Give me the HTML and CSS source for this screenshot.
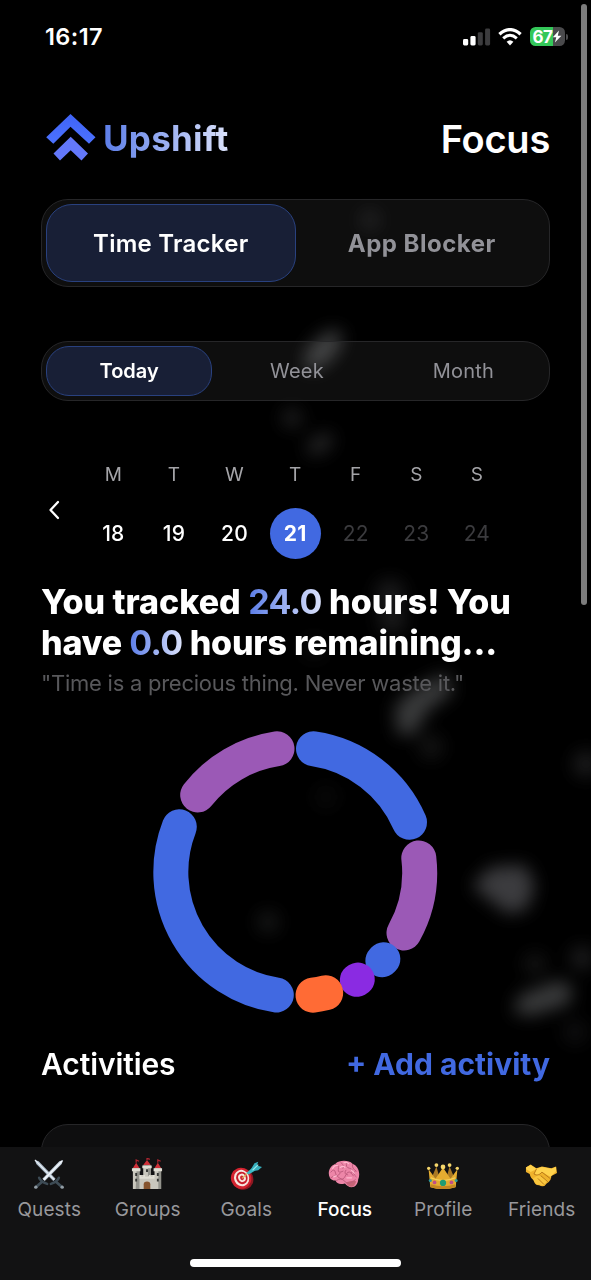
FILE: index.html
```html
<!DOCTYPE html>
<html lang="en">
<head>
<meta charset="utf-8">
<title>Upshift – Focus</title>
<link rel="stylesheet" href="styles.css">
</head>
<body>
<div class="app">
  <svg class="backdrop" viewBox="0 0 591 1280" aria-hidden="true">
    <defs>
      <filter id="soft" filterUnits="userSpaceOnUse" x="0" y="0" width="591" height="1280"><feGaussianBlur stdDeviation="8.5"/></filter>
    </defs>
    <g filter="url(#soft)" fill="#8b8c90">
      <ellipse cx="323" cy="350" rx="25" ry="12" transform="rotate(-48 323 350)" opacity=".42"/>
      <circle cx="370" cy="220" r="12" opacity=".12"/>
      <circle cx="292" cy="418" r="10" opacity=".22"/>
      <ellipse cx="320" cy="444" rx="15" ry="9" transform="rotate(-35 320 444)" opacity=".25"/>
      <circle cx="390" cy="594" r="15" opacity=".18"/>
      <circle cx="392" cy="620" r="14" opacity=".18"/>
      <circle cx="314" cy="648" r="12" opacity=".08"/>
      <path d="M397 734L395 706L414 689L446 673L453 692L428 710L414 735Z" opacity=".42"/>
      <circle cx="431" cy="747" r="12" opacity=".14"/>
      <circle cx="586" cy="764" r="13" opacity=".2"/>
      <path d="M472 886L491 867L525 865L535 885L527 909L508 914Z" opacity=".43"/>
      <circle cx="268" cy="922" r="11" opacity=".16"/>
      <circle cx="326" cy="797" r="12" opacity=".06"/>
      <circle cx="535" cy="964" r="11" opacity=".14"/>
      <circle cx="582" cy="958" r="12" opacity=".2"/>
      <path d="M513 1012L520 995L560 980L573 988L569 1004L530 1016Z" opacity=".42"/>
      <circle cx="575" cy="1032" r="12" opacity=".1"/>
    </g>
  </svg>

  <div class="status">
    <span class="status-time">16:17</span>
    <div class="status-icons">
      <svg width="28" height="18" viewBox="0 0 28 18">
        <rect x="0" y="11" width="5.2" height="6.5" rx="1.4" fill="#fff"/>
        <rect x="7.4" y="8" width="5.2" height="9.5" rx="1.4" fill="#fff"/>
        <rect x="14.8" y="4.2" width="5" height="13.3" rx="1.4" fill="#3c3c3e"/>
        <rect x="22.1" y="0.5" width="5" height="17" rx="1.4" fill="#3c3c3e"/>
      </svg>
      <svg class="wifi" width="24" height="18" viewBox="0 0 24 18">
        <path d="M1.400 6.300Q12-3 22.600 6.300" fill="none" stroke="#fff" stroke-width="3.3"/>
        <path d="M5.2 10.3Q12 4.3 18.8 10.3" fill="none" stroke="#fff" stroke-width="3"/>
        <path d="M8.6 13.8Q12 10.7 15.4 13.8L12 17.4Z" fill="#fff"/>
      </svg>
      <div class="battery"><span>67</span>
        <svg width="10" height="13" viewBox="0 0 10 13"><path d="M7 .5L.8 7.2H4.3L2.9 12.5L9.4 5.7H5.8Z" fill="#fff"/></svg>
      </div>
      <i class="battery-tip"></i>
    </div>
  </div>

  <header class="header">
    <div class="brand">
      <svg width="50" height="48" viewBox="0 0 50 48">
        <defs><linearGradient id="lg" x1="0" y1="0" x2="0" y2="1"><stop offset="0" stop-color="#3f63f6"/><stop offset="1" stop-color="#4c72ff"/></linearGradient></defs>
        <path d="M24.5 0L49.500 23.200L43 29.800L24.5 12.7L7.3 29.8L.2 23.200Z" fill="url(#lg)"/>
        <path d="M24.7 22.7L42 39.5L35.5 46.5L24.7 36.3L14 46.5L7.5 39.5Z" fill="#6378fa"/>
      </svg>
      <span class="brand-name gradient-text">Upshift</span>
    </div>
    <h1 class="title">Focus</h1>
  </header>

  <nav class="switch switch-large">
    <div class="option selected">Time Tracker</div>
    <div class="option">App Blocker</div>
  </nav>

  <nav class="switch switch-small">
    <div class="option selected">Today</div>
    <div class="option">Week</div>
    <div class="option">Month</div>
  </nav>

  <section class="week">
    <svg class="prev" width="14" height="20" viewBox="0 0 14 20"><path d="M11 2L3.500 10L11 18" fill="none" stroke="#fff" stroke-width="2.3" stroke-linecap="round" stroke-linejoin="round"/></svg>
    <div class="days">
      <div class="day"><span class="name">M</span><span class="num">18</span></div>
      <div class="day"><span class="name">T</span><span class="num">19</span></div>
      <div class="day"><span class="name">W</span><span class="num">20</span></div>
      <div class="day current"><span class="name">T</span><span class="num">21</span></div>
      <div class="day future"><span class="name">F</span><span class="num">22</span></div>
      <div class="day future"><span class="name">S</span><span class="num">23</span></div>
      <div class="day future"><span class="name">S</span><span class="num">24</span></div>
    </div>
  </section>

  <h2 class="summary">
    <span class="line first">You tracked <b class="gradient-text">24.0</b> hours! You</span>
    <span class="line second">have <b class="gradient-text">0.0</b> hours remaining...</span>
  </h2>
  <p class="quote">"Time is a precious thing. Never waste it."</p>

  <svg class="ring" width="286" height="286" viewBox="152 728.5 286 286">
    <g fill="none" stroke-width="35" stroke-linecap="round">
      <path d="M313.5 748.3A124.5 124.5 0 0 1 409.5 821.8" stroke="#4169e1"/>
      <path d="M418.8 857.5A124.5 124.5 0 0 1 404 932.5" stroke="#9b59b6"/>
      <path d="M383.6 958.5L382.1 960.1" stroke="#4169e1" stroke-width="33.500"/>
      <path d="M358 978.8L356.6 979.6" stroke="#8a2be2" stroke-width="33.5"/>
      <path d="M325.7 992.3A124.5 124.5 0 0 1 313 994.7" stroke="#ff6b35"/>
      <path d="M276.3 994.5A124.5 124.5 0 0 1 179.3 826.3" stroke="#4169e1"/>
      <path d="M197.7 794.5A124.5 124.5 0 0 1 277 748.3" stroke="#9b59b6"/>
    </g>
  </svg>

  <div class="activities">
    <h3>Activities</h3>
    <span class="add">+ Add activity</span>
  </div>
  <div class="card"></div>

  <nav class="tabbar">
    <div class="tab">
      <svg width="32" height="32" viewBox="0 0 34 34">
        <path d="M2 2L6 3.5L24 22L21.5 24.5L3.5 6.5Z" fill="#aebccb"/><path d="M2 2L22.7 23.2" stroke="#edf4fa" stroke-width="1.2"/>
        <path d="M32 2L28 3.5L10 22L12.5 24.5L30.5 6.5Z" fill="#c9d5e1"/><path d="M31 3L11.5 23" stroke="#f8fbff" stroke-width="1.3"/>
        <path d="M6.5 21Q8 25 15 27.5M27.500 21Q26 25 19 27.500" fill="none" stroke="#3c4a54" stroke-width="2.7" stroke-linecap="round"/>
        <path d="M10 25L3.500 30.500M24 25L30.500 30.500" stroke="#3f4d57" stroke-width="3"/>
        <circle cx="3" cy="31" r="1.8" fill="#929da5"/><circle cx="31" cy="31" r="1.8" fill="#929da5"/>
      </svg>
      <span>Quests</span>
    </div>
    <div class="tab">
      <svg width="32" height="32" viewBox="0 0 34 34">
        <path d="M2 11H9V18H13V8H21V18H25V11H32V33H2Z" fill="#c9c7bd"/>
        <path d="M6 11H9V33H5ZM18 8H21V19H18ZM29 11H32V33H29Z" fill="#93938c"/>
        <path d="M1 11H10V14H1ZM12 8H22V11H12ZM24 11H33V14H24Z" fill="#e0ded4"/>
        <path d="M9 18H11V20H13V18H15V20H19V18H21V20H23V18H25V22H9Z" fill="#e0ded4"/>
        <path d="M2 10.500L5.500 5L9 10.500ZM13 7.500L17 2L21 7.500ZM25 10.500L28.500 5L32 10.500Z" fill="#cf3038"/>
        <path d="M5.500 5V2L8.500 3.500M17 2V.2L20 1.500M28.500 5V2L31.500 3.500" fill="none" stroke="#ae2530" stroke-width="1.3"/>
        <path d="M13.500 33V28Q13.500 25 17 25Q20.500 25 20.500 28V33Z" fill="#86542e"/>
        <path d="M4.500 16H6.500V19H4.500ZM16 12H18V15H16ZM27.500 16H29.500V19H27.500ZM4.500 22H6.500V25H4.500ZM27.500 22H29.500V25H27.500Z" fill="#343633"/>
      </svg>
      <span>Groups</span>
    </div>
    <div class="tab">
      <svg width="32" height="32" viewBox="0 0 34 34">
        <g transform="rotate(-22 12 22)">
          <ellipse cx="13.500" cy="23" rx="11" ry="11.500" fill="#8e1721"/><ellipse cx="12" cy="21.500" rx="10.800" ry="11.300" fill="#d3232f"/>
          <ellipse cx="12.600" cy="21.500" rx="8" ry="8.800" fill="#f7e6df"/><ellipse cx="12.900" cy="21.500" rx="6" ry="6.700" fill="#c81e2b"/>
          <ellipse cx="13" cy="21.500" rx="4" ry="4.500" fill="#f8e8df"/><ellipse cx="13" cy="21.500" rx="2" ry="2.500" fill="#cf2733"/>
        </g>
        <path d="M13 21.500L20 15" stroke="#d7b45e" stroke-width="1.3"/>
        <path d="M17.500 16L23 11L25.500 14L20 17.500Z" fill="#3bb8c4"/>
        <path d="M22.500 11.500L26 5.500L30 4L28.500 8L34 9.500L30 13L25 14Z" fill="#36afbd"/><path d="M24 13L30 7" stroke="#9cecee" stroke-width="1.2"/>
      </svg>
      <span>Goals</span>
    </div>
    <div class="tab active">
      <svg width="32" height="32" viewBox="0 0 34 34">
        <path d="M2 21C-1 15 2 8 8 6C12 2 22 2 26 6C32 8 35 16 32 23C32 27 29 31 25 31C22 31 20 29 18 27C14 28 9 28 8 24C5 24 3 23 2 21Z" fill="#ed86a8"/>
        <path d="M19 26Q27 23 30 25Q28 31 24 30.500Q21 30 19 26Z" fill="#c76477"/>
        <path d="M3 15Q7 10 8 16T13 16M8 7Q12 7 11 12T16 14M14 5Q18 9 16 11M20 5Q18 10 23 11T25 16M26 7Q25 11 30 14M3 21Q8 17 12 21T19 18T27 19M9 24Q14 20 18 25T29 23M29 14Q25 16 30 20M19 13Q16 17 21 18" fill="none" stroke="#bd5b7d" stroke-width="1" stroke-linecap="round"/>
        <path d="M5 11Q7 7 10 8M17 5Q20 4 22 6M13 10Q16 8 18 10M25 13L28 16M6 20L9 19M20 21L25 21" fill="none" stroke="#ffb9ce" stroke-width="1.300" stroke-linecap="round"/>
      </svg>
      <span>Focus</span>
    </div>
    <div class="tab">
      <svg width="32" height="32" viewBox="0 0 34 34">
        <path d="M5 21L10 9L13 20L17 12L21 20L24 9L29 21V30H5Z" fill="#a97924"/>
        <path d="M3.500 31L1.700 12L9 22L17 10L25 22L32.300 12L30.500 31Q17 35 3.500 31Z" fill="#e4ac30"/>
        <path d="M4 28Q17 32 30 28L29.800 31Q17 35 4 31Z" fill="#c48722"/>
        <path d="M4 21Q17 27 30 21" fill="none" stroke="#f5d460" stroke-width="1.300"/>
        <g fill="#f5d66b"><circle cx="1.800" cy="11" r="1.800"/><circle cx="10" cy="7.500" r="2"/><circle cx="17" cy="9.500" r="2.500"/><circle cx="24" cy="7.500" r="2"/><circle cx="32.200" cy="11" r="1.800"/></g>
        <circle cx="17" cy="26.500" r="3.300" fill="#209c73"/><circle cx="8" cy="26" r="2" fill="#c14e88"/><circle cx="26" cy="26" r="2" fill="#c14e88"/><circle cx="3.500" cy="24" r="1.600" fill="#2999a2"/><circle cx="31" cy="24" r="1.600" fill="#2999a2"/>
      </svg>
      <span>Profile</span>
    </div>
    <div class="tab">
      <svg width="32" height="32" viewBox="0 0 34 34">
        <path d="M1 10L6 7L12 11L18 9L28 11L33 9L34 16L28 19Q28 24 23 27Q20 32 15 29Q10 29 9 23Q6 22 5 17L1 15Z" fill="#efb22c"/>
        <path d="M1 10L6 7.500L12 11.500L18 9.500L28 11.500L33 9.500V14L27 20L18 15L14 19L10 17L12 12L6 15L1.500 12Z" fill="#ffd24d"/>
        <path d="M8 22L14 18L24 24L20 29L12 28Z" fill="#f9c63f"/>
        <path d="M12 12L9.500 17Q14 20 18 15L27 22M17 19L24 25M14 22L20 28" fill="none" stroke="#b87918" stroke-width="1" stroke-linecap="round"/>
      </svg>
      <span>Friends</span>
    </div>
    <i class="home-bar"></i>
  </nav>
  <i class="scrollbar"></i>
</div>
</body>
</html>
```
FILE: styles.css
```css
* { box-sizing: border-box; }
body { margin: 0; background: #000; color: #fff; font-family: Inter, "Liberation Sans", sans-serif; }
h1, h2, h3, p { margin: 0; }
svg { display: block; flex: none; }
.app { position: relative; width: 591px; height: 1280px; overflow: hidden; padding: 0 41px; background: #000; display: flow-root; white-space: nowrap; }
.app > :not(.backdrop):not(.tabbar):not(.scrollbar) { position: relative; }
.backdrop { position: absolute; left: 0; top: 0; width: 591px; height: 1280px; }

.status { display: flex; justify-content: space-between; align-items: center; height: 73px; margin-right: -18px; padding-left: 4px; }
.status-time { font-size: 23.500px; font-weight: 600; letter-spacing: .4px; }
.status-icons { display: flex; align-items: center; }
.wifi { margin-left: 7px; }
.battery { display: flex; align-items: center; justify-content: center; width: 35px; height: 19px; margin-left: 8px; border-radius: 5.5px; background: linear-gradient(90deg, #34c759 67%, #4a4a4c 67%); font-size: 17px; font-weight: 700; letter-spacing: -.5px; }
.battery-tip { width: 2px; height: 6px; margin-left: 1px; border-radius: 0 2px 2px 0; background: #4a4a4c; }

.header { display: flex; justify-content: space-between; align-items: center; height: 60px; margin-top: 35px; }
.brand { display: flex; align-items: center; gap: 7px; padding-left: 5px; }
.gradient-text { color: transparent; background: linear-gradient(90deg, #5b7de8, #dbe2fb); -webkit-background-clip: text; background-clip: text; }
.brand-name { font-size: 35px; font-weight: 700; line-height: 50px; letter-spacing: .25px; }
.title { padding-top: 2px; font-size: 38px; font-weight: 600; letter-spacing: -.25px; }

.switch { display: grid; padding: 4px; border: 1.500px solid #262628; background: rgba(255, 255, 255, .055); }
.option { display: flex; align-items: center; justify-content: center; color: #929298; border: 1.500px solid transparent; }
.selected { color: #fff; background: #181f36; border-color: #29417f; }
.switch-large { grid-template-columns: 1fr 1fr; height: 88px; margin-top: 31px; border-radius: 27px; font-size: 24px; font-weight: 600; letter-spacing: .25px; }
.switch-large .option { border-radius: 26px; }
.switch-large .option:not(.selected) { padding-left: 3px; font-weight: 700; letter-spacing: .5px; }
.switch-small { grid-template-columns: repeat(3, 1fr); height: 60px; margin-top: 53.500px; border-radius: 27px; font-size: 20px; }
.switch-small .option { padding-top: 1px; border-radius: 23px; }
.switch-small .option:not(.selected) { padding-left: 3px; letter-spacing: .2px; }
.switch-small .selected { font-weight: 600; }

.week { display: flex; height: 98px; margin-top: 60.500px; }
.prev { margin: 39px 0 0 6px; }
.days { display: flex; margin-left: 22px; }
.day { display: flex; flex-direction: column; align-items: center; width: 60.600px; }
.name { height: 28px; line-height: 28px; font-size: 19px; color: #a4a4a8; }
.num { width: 51px; height: 51px; margin-top: 18.500px; line-height: 52px; text-align: center; border-radius: 50%; font-size: 21px; font-weight: 500; letter-spacing: .2px; }
.current .num { background: #4169e1; font-weight: 700; }
.future .num { color: #3b3b3e; font-weight: 400; }

.summary { margin-top: 21.500px; font-size: 34px; line-height: 41px; font-weight: 800; }
.summary b { font-weight: 700; letter-spacing: -.65px; }
.line { display: block; width: max-content; }
.first { letter-spacing: 0; }
.second { letter-spacing: -.2px; }
.quote { height: 32px; margin-top: 4px; line-height: 32px; font-size: 22px; letter-spacing: -.25px; color: #58585b; }
.ring { margin: 30px 0 0 111px; }

.activities { display: flex; align-items: center; justify-content: space-between; height: 44px; margin-top: 27.500px; }
.activities h3, .add { font-size: 30px; font-weight: 600; letter-spacing: -.1px; }
.activities .add { font-weight: 700; letter-spacing: 0; }
.add { color: #4169e1; }
.card { height: 200px; margin-top: 37.500px; border: 1.500px solid #262628; border-radius: 27px; background: #0e0e0f; }

.tabbar { position: absolute; left: 0; right: 0; bottom: 0; height: 133px; background: #121213; display: flex; }
.tab { display: flex; flex: 1; flex-direction: column; align-items: center; padding-top: 11px; font-size: 19px; letter-spacing: .1px; color: #98989c; }
.tab svg { margin-right: 1px; }
.tab span { margin-top: 5px; line-height: 29px; }
.active { color: #fff; font-weight: 500; letter-spacing: 0; }
.home-bar { position: absolute; left: 190px; bottom: 13px; width: 211px; height: 8px; border-radius: 4px; background: #fff; }
.scrollbar { position: absolute; left: 581px; top: 4px; width: 6px; height: 601px; border-radius: 3px; background: #7c7c7c; }
```
